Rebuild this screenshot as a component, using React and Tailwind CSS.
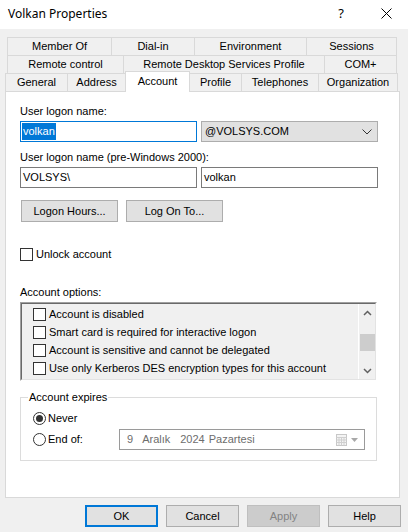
import React from "react";

function Tab({ className, children }) {
  return (
    <div className={"h-[18px] border-t border-l border-[#d9d9d9] bg-[#f0f0f0] flex items-center justify-center whitespace-nowrap " + className}>
      {children}
    </div>
  );
}

function CheckBox() {
  return <div className="w-[13px] h-[13px] border border-[#333333] bg-white shrink-0" />;
}

function Radio({ checked }) {
  return (
    <div className="w-[13px] h-[13px] rounded-full border border-[#333333] bg-white shrink-0 flex items-center justify-center">
      {checked ? <div className="w-[7px] h-[7px] rounded-full bg-[#333333]" /> : null}
    </div>
  );
}

function Btn({ className, children }) {
  return (
    <div className={"h-[22px] border border-[#adadad] bg-[#e1e1e1] flex items-center justify-center " + className}>
      {children}
    </div>
  );
}

export default function App() {
  return (
    <div className="w-[408px] h-[532px] bg-[#f0f0f0] overflow-hidden text-[11px] leading-[13px] text-black font-['Liberation_Sans',Arial,sans-serif]">
      {/* Title bar */}
      <div className="h-[29px] bg-white flex items-center">
        <div className="flex-1 pl-[8px] text-[12px] font-['Noto_Sans',sans-serif] pb-[2px]">Volkan Properties</div>
        <div className="w-[46px] h-full flex items-center justify-center text-[13px] font-['Noto_Sans',sans-serif] pb-[2px]">?</div>
        <div className="w-[44px] h-full flex items-center justify-center pb-[2px]">
          <svg width="11" height="11" viewBox="0 0 11 11">
            <path d="M0.5 0.5 L10.5 10.5 M10.5 0.5 L0.5 10.5" stroke="#000" strokeWidth="1" fill="none" />
          </svg>
        </div>
      </div>

      {/* Tabs */}
      <div className="mt-[8px]">
        <div className="flex ml-[7px]">
          <Tab className="w-[104px]">Member Of</Tab>
          <Tab className="w-[83px]">Dial-in</Tab>
          <Tab className="w-[112px]">Environment</Tab>
          <Tab className="w-[91px] border-r">Sessions</Tab>
        </div>
        <div className="flex ml-[7px]">
          <Tab className="w-[116px]">Remote control</Tab>
          <Tab className="w-[201px]">Remote Desktop Services Profile</Tab>
          <Tab className="w-[73px] border-r">COM+</Tab>
        </div>
        <div className="flex items-start ml-[5px] h-[18px]">
          <Tab className="w-[62px]">General</Tab>
          <Tab className="w-[58px]">Address</Tab>
          <div className="w-[65px] h-[21px] -mt-[2px] relative z-10 bg-white border-t border-l border-r border-[#d9d9d9] flex items-center justify-center pb-[1px]">
            Account
          </div>
          <div className="w-[51px] h-[18px] border-t border-[#d9d9d9] flex items-center justify-center">Profile</div>
          <Tab className="w-[77px]">Telephones</Tab>
          <Tab className="w-[80px] border-r">Organization</Tab>
        </div>
      </div>

      {/* Panel */}
      <div className="ml-[5px] w-[395px] h-[407px] bg-white border border-[#d9d9d9] flex flex-col pl-[14px]">
        <div className="mt-[13px] h-[13px]">User logon name:</div>
        <div className="mt-[3px] flex gap-[4px]">
          <div className="w-[177px] h-[21px] border border-[#0078d7] flex items-center pl-[1px]">
            <span className="bg-[#0078d7] text-white h-[17px] leading-[17px] px-[1px]">volkan</span>
          </div>
          <div className="w-[177px] h-[21px] border border-[#adadad] bg-[#e1e1e1] flex items-center pl-[3px]">
            <span className="flex-1">@VOLSYS.COM</span>
            <svg width="10" height="6" viewBox="0 0 10 6" className="mr-[5px]">
              <path d="M0.5 0.5 L5 5 L9.5 0.5" stroke="#333" strokeWidth="1" fill="none" />
            </svg>
          </div>
        </div>
        <div className="mt-[9px] h-[13px]">User logon name (pre-Windows 2000):</div>
        <div className="mt-[3px] flex gap-[4px]">
          <div className="w-[177px] h-[21px] border border-[#7a7a7a] flex items-center pl-[2px]">VOLSYS\</div>
          <div className="w-[177px] h-[21px] border border-[#7a7a7a] flex items-center pl-[2px]">volkan</div>
        </div>
        <div className="mt-[12px] flex gap-[8px] ml-[1px]">
          <Btn className="w-[97px]">Logon Hours...</Btn>
          <Btn className="w-[97px]">Log On To...</Btn>
        </div>
        <div className="mt-[26px] flex items-center h-[13px]">
          <CheckBox />
          <span className="ml-[3px]">Unlock account</span>
        </div>
        <div className="mt-[25px] h-[13px]">Account options:</div>

        {/* List box */}
        <div className="mt-[3px] w-[357px] h-[79px] border-t border-l border-[#a0a0a0] border-r border-b border-r-white border-b-white">
          <div className="w-full h-full border-t border-l border-[#696969] border-r border-b border-r-[#e3e3e3] border-b-[#e3e3e3] bg-[#f0f0f0] flex">
            <div className="flex-1 flex flex-col pl-[11px] pt-[1px]">
              {[
                "Account is disabled",
                "Smart card is required for interactive logon",
                "Account is sensitive and cannot be delegated",
                "Use only Kerberos DES encryption types for this account",
              ].map((t) => (
                <div key={t} className="h-[18px] flex items-center">
                  <CheckBox />
                  <span className="ml-[3px] whitespace-nowrap">{t}</span>
                </div>
              ))}
            </div>
            <div className="w-[17px] border-l border-white flex flex-col items-center">
              <div className="h-[17px] flex items-center justify-center">
                <svg width="9" height="6" viewBox="0 0 9 6">
                  <path d="M1 5 L4.5 1.5 L8 5" stroke="#606060" strokeWidth="1.5" fill="none" />
                </svg>
              </div>
              <div className="mt-[13px] w-[15px] h-[17px] bg-[#cdcdcd]" />
              <div className="mt-auto h-[17px] flex items-center justify-center">
                <svg width="9" height="6" viewBox="0 0 9 6">
                  <path d="M1 1 L4.5 4.5 L8 1" stroke="#606060" strokeWidth="1.5" fill="none" />
                </svg>
              </div>
            </div>
          </div>
        </div>

        {/* Account expires group */}
        <div className="relative mt-[16px] w-[357px] h-[64px] border border-[#dcdcdc] flex flex-col pl-[12px]">
          <div className="absolute -top-[7px] left-[7px] bg-white px-[1px] h-[13px]">Account expires</div>
          <div className="mt-[14px] h-[13px] flex items-center">
            <Radio checked />
            <span className="ml-[2px]">Never</span>
          </div>
          <div className="mt-[4px] h-[21px] flex items-center">
            <Radio />
            <span className="ml-[2px] w-[71px]">End of:</span>
            <div className="w-[246px] h-[21px] border border-[#9a9a9a] flex items-center text-[#6d6d6d] pl-[7px]">
              <span>9</span>
              <span className="ml-[9px]">Aralık</span>
              <span className="ml-[10px]">2024</span>
              <span className="ml-[4px]">Pazartesi</span>
              <div className="ml-auto mr-[6px] flex items-center gap-[4px]">
                <svg width="11" height="12" viewBox="0 0 11 12">
                  <rect x="0.5" y="0.5" width="10" height="11" fill="#f4f4f4" stroke="#c8c8c8" />
                  <path d="M0.5 3.5 H10.5 M0.5 6 H10.5 M0.5 8.5 H10.5 M3 3.5 V11.5 M5.5 3.5 V11.5 M8 3.5 V11.5" stroke="#d0d0d0" strokeWidth="1" />
                </svg>
                <svg width="7" height="4" viewBox="0 0 7 4">
                  <path d="M0 0 H7 L3.5 4 Z" fill="#a8a8a8" />
                </svg>
              </div>
            </div>
          </div>
        </div>
      </div>

      {/* Bottom buttons */}
      <div className="mt-[7px] ml-[85px] flex gap-[8px]">
        <div className="w-[73px] h-[22px] border-2 border-[#0078d7] bg-[#e1e1e1] flex items-center justify-center">OK</div>
        <Btn className="w-[73px]">Cancel</Btn>
        <div className="w-[73px] h-[22px] border border-[#bfbfbf] bg-[#cccccc] text-[#838383] flex items-center justify-center">Apply</div>
        <Btn className="w-[73px]">Help</Btn>
      </div>
    </div>
  );
}
